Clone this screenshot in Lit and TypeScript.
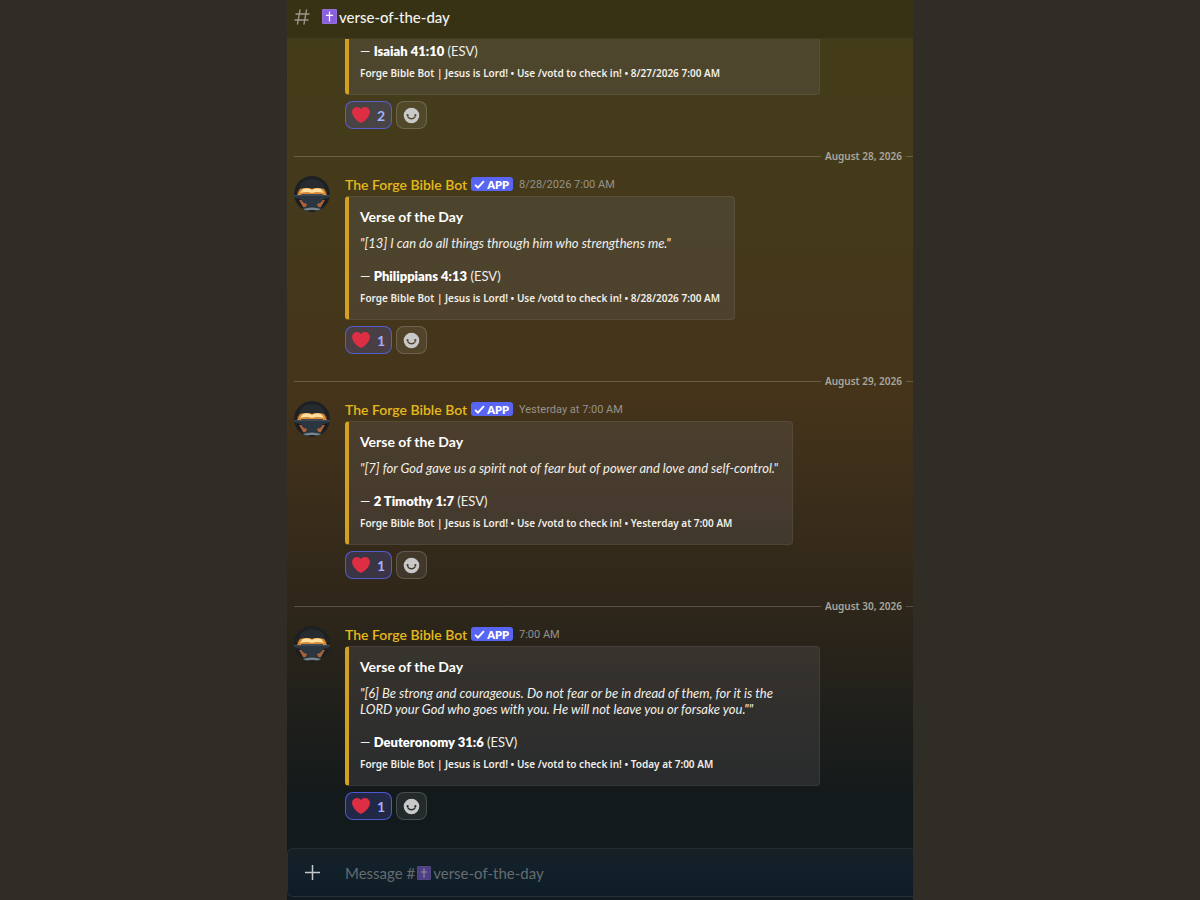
import { LitElement, html, css, svg, nothing } from "lit";
import { customElement, property } from "lit/decorators.js";

interface Verse {
  day?: string;
  stamp?: string;
  quote?: string;
  reference: string;
  footerTime: string;
  hearts: number;
}

const VERSES: Verse[] = [
  {
    reference: "Isaiah 41:10",
    footerTime: "8/27/2026 7:00 AM",
    hearts: 2,
  },
  {
    day: "August 28, 2026",
    stamp: "8/28/2026 7:00 AM",
    quote: "[13] I can do all things through him who strengthens me.",
    reference: "Philippians 4:13",
    footerTime: "8/28/2026 7:00 AM",
    hearts: 1,
  },
  {
    day: "August 29, 2026",
    stamp: "Yesterday at 7:00 AM",
    quote: "[7] for God gave us a spirit not of fear but of power and love and self-control.",
    reference: "2 Timothy 1:7",
    footerTime: "Yesterday at 7:00 AM",
    hearts: 1,
  },
  {
    day: "August 30, 2026",
    stamp: "7:00 AM",
    quote:
      '[6] Be strong and courageous. Do not fear or be in dread of them, for it is the LORD your God who goes with you. He will not leave you or forsake you."',
    reference: "Deuteronomy 31:6",
    footerTime: "Today at 7:00 AM",
    hearts: 1,
  },
];

const crossIcon = html`<svg class="cross" viewBox="0 0 36 36" aria-hidden="true">
  <rect width="36" height="36" rx="3" fill="#9a72d8" />
  <rect x="2" y="2" width="32" height="32" rx="2" fill="#8a5fe0" />
  <path d="M16.500 6h3v8h7v3h-7v13h-3V17h-7v-3h7z" fill="#fff" />
</svg>`;

const avatar = svg`
  <circle cx="18" cy="18" r="18" fill="#1c2023"/>
  <path d="M4 14q3-11 14-11t14 11z" fill="#262b2f"/>
  <path d="M3 22h30l-3 6-5 5H11l-5-5z" fill="#1a1715"/>
  <path d="M5 24q5-1 9 2l-2 5H9z" fill="#a8623a"/>
  <path d="M31 24q-5-1-9 2l2 5h3z" fill="#a8623a"/>
  <ellipse cx="18" cy="16" rx="15" ry="4" fill="#7a4516" opacity=".8"/>
  <path d="M3 19l3-6q7-2 12 0q5-2 12 0l3 6z" fill="#d98a35"/>
  <path d="M6 17l3-4q5-2 9 1q4-3 9-1l3 4q-7-2-12 0q-5-2-12 0z" fill="#ffe0a0"/>
  <path d="M0 19h7l1-1h20l1 1h7v2q-3 2-7 2-1 4-6 5v3h4v2H9v-2h4v-3q-5-1-6-5-4 0-7-2z" fill="#2c3640"/>
  <path d="M0 19h7l1-1h20l1 1h7v1H0z" fill="#3f4a54"/>
  <path d="M9 33q9-3 18 0l-3 1.500q-6-1-12 0z" fill="#77838b"/>
`;

@customElement("verse-message")
class VerseMessage extends LitElement {
  @property({ attribute: false }) verse!: Verse;

  static styles = css`
    :host { display: block; }
    .divider {
      display: flex; align-items: center; gap: 4px;
      height: 16px; margin: 19px 0 12px;
      font-family: "Noto Sans", sans-serif; font-size: 10px; font-weight: 600; color: #aaa69c;
    }
    .divider::before { content: ""; flex: 1; height: 1px; background: #ffffff33; }
    .divider::after { content: ""; width: 7px; height: 1px; background: #ffffff33; }
    .message { display: grid; grid-template-columns: 36px minmax(0, 1fr); column-gap: 15px; }
    .avatar { width: 36px; height: 36px; border-radius: 50%; }
    .body { grid-column: 2; }
    .head { display: flex; align-items: center; height: 16px; margin-bottom: 4px; white-space: nowrap; }
    .name { font-size: 14px; font-weight: 600; color: #e5b91c; margin-right: 4px; }
    .app {
      display: flex; align-items: center; gap: 2px; height: 14px; padding: 0 4px 0 3px;
      border-radius: 3px; background: #5865f2; color: #fff; font-size: 11px; font-weight: 800;
      margin-right: 6px;
    }
    .app svg { width: 11px; height: 11px; }
    .stamp { font-family: Roboto, sans-serif; font-size: 11px; color: #96928a; }
    .embed {
      box-sizing: border-box; width: fit-content; max-width: 475px;
      padding: 11px 14px 14px 11px;
      border: 1px solid #ffffff10; border-left: 4px solid #d4a021; border-radius: 4px;
      background: #6c6a6e3a; color: #f2efe9;
    }
    .wide { width: auto; }
    h3 { margin: 0 0 9px; font-size: 14px; line-height: 18px; font-weight: 700; color: #fff; }
    p { margin: 0; font-size: 13px; line-height: 16px; }
    .quote { margin-bottom: 17px; font-style: italic; }
    b { font-weight: 800; color: #fff; }
    .foot {
      margin-top: 7px; font-family: "Noto Sans", sans-serif;
      font-size: 10px; line-height: 14px; font-weight: 600;
    }
    .reactions { display: flex; gap: 4px; margin-top: 6px; }
    button {
      box-sizing: border-box; display: flex; align-items: center; justify-content: center;
      height: 28px; padding: 0 6px; border-radius: 8px; font: inherit;
      border: 1px solid #ffffff2b; background: #ffffff12;
    }
    .heart { border-color: #5865f2cc; background: #5865f233; color: #a5b0fb; gap: 7px; font-size: 14px; font-weight: 700; }
    .heart svg { width: 18px; height: 18px; }
    .add svg { width: 17px; height: 17px; }
  `;

  render() {
    const v = this.verse;
    return html`
      ${v.day ? html`<div class="divider" role="separator">${v.day}</div>` : nothing}
      <article class="message">
        ${v.quote ? html`<svg class="avatar" viewBox="0 0 36 36" aria-hidden="true">${avatar}</svg>` : nothing}
        <div class="body">
          ${v.stamp
            ? html`<header class="head">
                <span class="name">The Forge Bible Bot</span>
                <span class="app">
                  <svg viewBox="0 0 10 10" aria-hidden="true"><path d="M1 5.300l2.600 2.500L9 2" fill="none" stroke="#fff" stroke-width="1.700" /></svg>APP
                </span>
                <time class="stamp">${v.stamp}</time>
              </header>`
            : nothing}
          <section class="embed ${v.quote ? "" : "wide"}">
            ${v.quote
              ? html`<h3>Verse of the Day</h3>
                  <p class="quote">"${v.quote}"</p>`
              : nothing}
            <p>— <b>${v.reference}</b> (ESV)</p>
            <p class="foot">Forge Bible Bot | Jesus is Lord! • Use /votd to check in! • ${v.footerTime}</p>
          </section>
          <div class="reactions">
            <button class="heart" aria-pressed="true">
              <svg viewBox="0 0 36 36" aria-hidden="true"><path fill="#dd2e44" d="M35.885 11.833c0-5.45-4.418-9.868-9.867-9.868-3.308 0-6.227 1.633-8.018 4.129-1.791-2.496-4.71-4.129-8.017-4.129-5.45 0-9.868 4.417-9.868 9.868 0 .772.098 1.52.266 2.241C1.751 22.587 11.216 31.568 18 34.034c6.783-2.466 16.249-11.447 17.617-19.959.17-.721.268-1.469.268-2.242z" /></svg>${v.hearts}
            </button>
            <button class="add" aria-label="Add reaction">
              <svg viewBox="0 0 24 24" aria-hidden="true">
                <path fill="#c9c9c9" fill-rule="evenodd" d="M12 23a11 11 0 1 0 0-22 11 11 0 0 0 0 22ZM6.500 13a1.500 1.500 0 1 0 0-3 1.500 1.500 0 0 0 0 3Zm11 0a1.500 1.500 0 1 0 0-3 1.500 1.500 0 0 0 0 3Zm-9.670.440a1 1 0 1 0-1.660 1.120 7 7 0 0 0 11.660 0 1 1 0 1 0-1.660-1.120 5 5 0 0 1-8.340 0Z" />
              </svg>
            </button>
          </div>
        </div>
      </article>
    `;
  }
}

@customElement("app-root")
class AppRoot extends LitElement {
  static styles = css`
    :host {
      display: grid; grid-template-columns: 287fr minmax(0, 626fr) 287fr; height: 100vh;
      background: #302d27; font-family: Lato, "Noto Sans", sans-serif;
    }
    .channel {
      grid-column: 2; display: flex; flex-direction: column; min-height: 0;
      background: linear-gradient(#443d19 0%, #443a1b 22%, #45341a 44%, #30271a 66%, #141a1b 88%, #101a20 100%);
    }
    .top {
      box-sizing: border-box; display: flex; align-items: center; flex: none;
      height: 39px; padding: 0 7px 5px; border-bottom: 1px solid #ffffff0c; background: #0000002e;
    }
    .hash { width: 16px; height: 16px; margin-right: 12px; }
    h1 { display: flex; align-items: center; gap: 2px; margin: 0; font-size: 15px; line-height: 20px; font-weight: 500; color: #f4f2ee; }
    .cross { width: 15px; height: 15px; flex: none; }
    .log {
      flex: 1; min-height: 0; overflow: hidden; display: flex; flex-direction: column;
      justify-content: flex-end; padding: 0 0 28px 7px;
    }
    .composer {
      flex: none; box-sizing: border-box; display: flex; align-items: center; height: 49px;
      margin-bottom: 3px; padding-left: 16px;
      border: 1px solid #ffffff14; border-right: 0; border-radius: 6px 0 0 6px;
      background: linear-gradient(#172023, #12202a 40%, #0e1c25);
    }
    .plus { display: flex; margin: 0 24px 0 0; padding: 0; border: 0; background: none; }
    .plus svg { width: 17px; height: 17px; }
    .field { display: grid; flex: 1; align-items: center; font-size: 15px; color: #656c70; }
    .field label, .field input { grid-area: 1 / 1; }
    .field label { display: flex; align-items: center; gap: 2px; white-space: nowrap; pointer-events: none; }
    .field input { border: 0; padding: 0; height: 24px; background: none; color: #eee; font: inherit; outline: 0; }
    .field .cross { width: 14px; height: 14px; opacity: .5; }
    .field input:not(:placeholder-shown) + label { visibility: hidden; }
  `;

  render() {
    return html`
      <main class="channel">
        <header class="top">
          <svg class="hash" viewBox="0 0 16 16" aria-hidden="true"><path d="M6 1L3.500 15M12.500 1L10 15M2 5h13M1 11h13" fill="none" stroke="#9b978d" stroke-width="1.400" stroke-linecap="round" /></svg>
          <h1>${crossIcon}verse-of-the-day</h1>
        </header>
        <div class="log">${VERSES.map((v) => html`<verse-message .verse=${v}></verse-message>`)}</div>
        <form class="composer" @submit=${(e: Event) => e.preventDefault()}>
          <button class="plus" type="button" aria-label="Add attachment">
            <svg viewBox="0 0 17 17" aria-hidden="true"><path d="M8.500 1v15M1 8.500h15" stroke="#c3c8ca" stroke-width="1.500" /></svg>
          </button>
          <div class="field">
            <input id="message" type="text" placeholder=" " autocomplete="off" />
            <label for="message">Message # ${crossIcon}verse-of-the-day</label>
          </div>
        </form>
      </main>
    `;
  }
}
